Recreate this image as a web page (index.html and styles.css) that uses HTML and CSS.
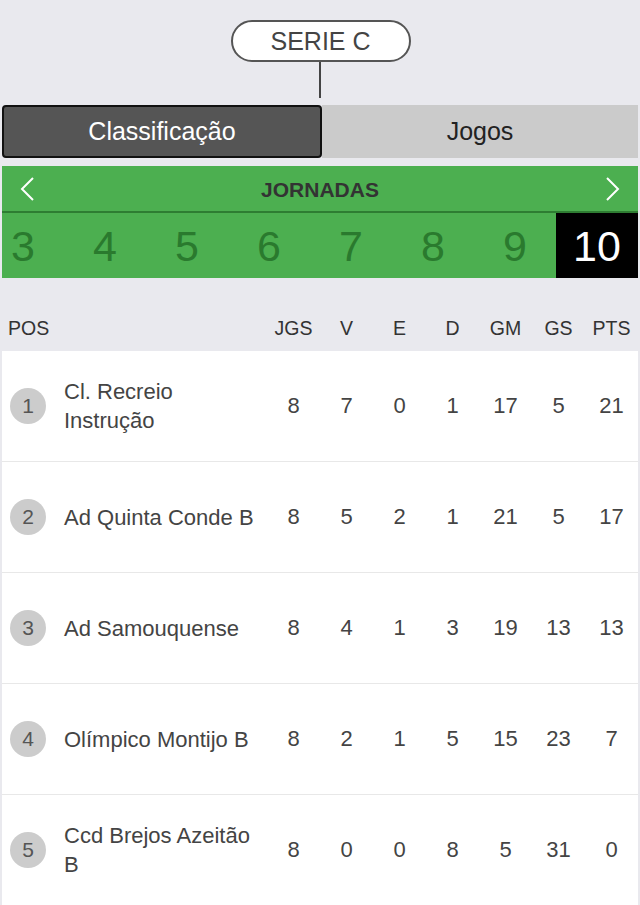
FILE: index.html
```html
<!DOCTYPE html>
<html lang="pt">
<head>
<meta charset="utf-8">
<link rel="stylesheet" href="styles.css">
</head>
<body>
<div class="page">
  <div class="serie">
    <div class="pill">SERIE C</div>
    <div class="stem"></div>
  </div>
  <div class="tabs">
    <div class="tab active">Classificação</div>
    <div class="tab">Jogos</div>
  </div>
  <div class="jornadas">
    <div class="jhead">
      <svg class="arrow" width="16" height="26" viewBox="0 0 16 26"><polyline points="14,2 3,13 14,24" fill="none" stroke="#fff" stroke-width="2"/></svg>
      <span class="jtitle">JORNADAS</span>
      <svg class="arrow" width="16" height="26" viewBox="0 0 16 26"><polyline points="2,2 13,13 2,24" fill="none" stroke="#fff" stroke-width="2"/></svg>
    </div>
    <div class="jnums">
      <div class="jn">3</div><div class="jn">4</div><div class="jn">5</div><div class="jn">6</div><div class="jn">7</div><div class="jn">8</div><div class="jn">9</div><div class="jn sel">10</div>
    </div>
  </div>
  <div class="thead">
    <div class="c-pos">POS</div><div></div>
    <div class="c">JGS</div><div class="c">V</div><div class="c">E</div><div class="c">D</div><div class="c">GM</div><div class="c">GS</div><div class="c">PTS</div>
  </div>
  <div class="rows">
    <div class="row"><div class="c-pos"><span class="badge">1</span></div><div class="name">Cl. Recreio Instrução</div><div class="c">8</div><div class="c">7</div><div class="c">0</div><div class="c">1</div><div class="c">17</div><div class="c">5</div><div class="c">21</div></div>
    <div class="row"><div class="c-pos"><span class="badge">2</span></div><div class="name">Ad Quinta Conde B</div><div class="c">8</div><div class="c">5</div><div class="c">2</div><div class="c">1</div><div class="c">21</div><div class="c">5</div><div class="c">17</div></div>
    <div class="row"><div class="c-pos"><span class="badge">3</span></div><div class="name">Ad Samouquense</div><div class="c">8</div><div class="c">4</div><div class="c">1</div><div class="c">3</div><div class="c">19</div><div class="c">13</div><div class="c">13</div></div>
    <div class="row"><div class="c-pos"><span class="badge">4</span></div><div class="name">Olímpico Montijo B</div><div class="c">8</div><div class="c">2</div><div class="c">1</div><div class="c">5</div><div class="c">15</div><div class="c">23</div><div class="c">7</div></div>
    <div class="row"><div class="c-pos"><span class="badge">5</span></div><div class="name">Ccd Brejos Azeitão B</div><div class="c">8</div><div class="c">0</div><div class="c">0</div><div class="c">8</div><div class="c">5</div><div class="c">31</div><div class="c">0</div></div>
  </div>
</div>
</body>
</html>
```

FILE: styles.css
```css
html, body {
  margin: 0;
  padding: 0;
  background: #e9e9ee;
  font-family: "Liberation Sans", Arial, sans-serif;
  color: #444;
}
.page {
  padding: 0 2px;
  width: 636px;
}
.serie {
  display: flex;
  flex-direction: column;
  align-items: center;
  padding-top: 20px;
}
.pill {
  box-sizing: border-box;
  width: 180px;
  height: 42px;
  margin-left: 1px;
  border: 2px solid #555;
  border-radius: 21px;
  background: #fff;
  font-size: 25px;
  color: #444;
  display: flex;
  align-items: center;
  justify-content: center;
}
.stem {
  width: 2px;
  height: 36px;
  background: #444;
}
.tabs {
  margin-top: 7px;
  display: flex;
  height: 53px;
}
.tab {
  flex: 1;
  display: flex;
  align-items: center;
  justify-content: center;
  font-size: 25px;
  background: #cbcbcb;
  color: #222;
}
.tab.active {
  background: #555;
  color: #fff;
  border: 2px solid #111;
  border-radius: 4px;
  box-sizing: border-box;
}
.jornadas {
  margin-top: 8px;
  background: #4caf50;
}
.jhead {
  height: 45px;
  display: flex;
  align-items: center;
  justify-content: space-between;
  padding: 0 17px;
  border-bottom: 2px solid #2e7d32;
}
.jtitle {
  font-weight: bold;
  font-size: 21px;
  color: #333;
  padding-top: 2px;
}
.arrow { display: block; }
.jnums {
  display: flex;
  justify-content: flex-end;
  overflow: hidden;
  height: 65px;
}
.jn {
  flex: 0 0 82px;
  display: flex;
  align-items: center;
  justify-content: center;
  font-size: 43px;
  color: #2a7a2e;
  padding-top: 2px;
  box-sizing: border-box;
}
.jn.sel {
  background: #000;
  color: #fff;
}
.thead, .row {
  display: grid;
  grid-template-columns: 62px 1fr repeat(7, 53px);
  align-items: center;
}
.thead {
  margin-top: 28px;
  height: 45px;
  font-size: 19.5px;
  color: #333;
}
.thead .c-pos { padding-left: 6px; }
.c { text-align: center; }
.rows {
  background: #fff;
}
.row {
  height: 110px;
  border-bottom: 1px solid #e8e8e8;
  font-size: 22px;
  color: #444;
}
.row .c-pos { padding-left: 8px; }
.badge {
  display: flex;
  width: 36px;
  height: 36px;
  border-radius: 50%;
  background: #ccc;
  color: #555;
  align-items: center;
  justify-content: center;
  font-size: 21px;
}
.name {
  line-height: 29px;
  padding-right: 4px;
}
```
